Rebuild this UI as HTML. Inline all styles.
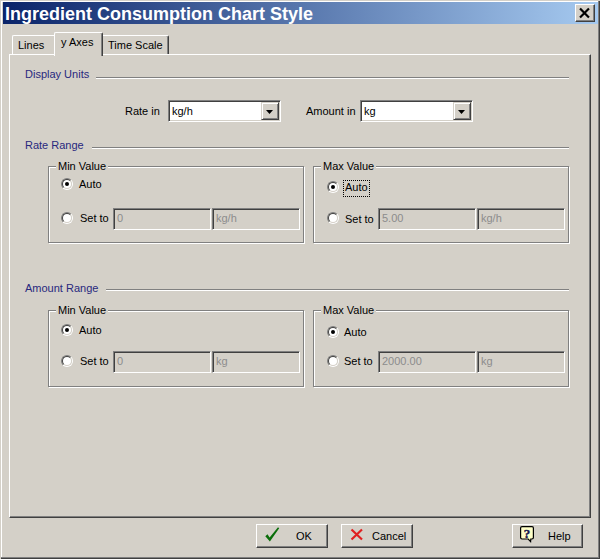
<!DOCTYPE html>
<html><head><meta charset="utf-8">
<style>
*{margin:0;padding:0;box-sizing:border-box}
html,body{width:601px;height:560px;overflow:hidden}
body{background:#d4d0c8;position:relative;font-family:"Liberation Sans",sans-serif;font-size:11px;color:#000}
.a{position:absolute}
.t{position:absolute;white-space:nowrap;line-height:13px;font-size:11px}
.h{color:#28287e}
.g{color:#8c8c8c}
.btn{position:absolute;background:#d4d0c8;border-top:1px solid #fff;border-left:1px solid #fff;border-right:1px solid #404040;border-bottom:1px solid #404040;box-shadow:inset -1px -1px #808080}
.fld{position:absolute;background:#d4d0c8;border-top:1px solid #808080;border-left:1px solid #808080;border-right:1px solid #fff;border-bottom:1px solid #fff;box-shadow:inset 1px 1px #404040,inset -1px -1px #d4d0c8}
.cmb{position:absolute;background:#fff;border-top:1px solid #808080;border-left:1px solid #808080;border-right:1px solid #fff;border-bottom:1px solid #fff;box-shadow:inset 1px 1px #404040,inset -1px -1px #d4d0c8}
.dd{position:absolute;width:18px;height:18px;background:#d4d0c8;border-top:1px solid #d4d0c8;border-left:1px solid #d4d0c8;border-right:1px solid #404040;border-bottom:1px solid #404040;box-shadow:inset 1px 1px #fff,inset -1px -1px #808080}
.grp{position:absolute;border:1px solid #808080;box-shadow:inset 1px 1px #fff,1px 1px #fff}
.sep{position:absolute;height:2px;border-top:1px solid #808080;border-bottom:1px solid #fff}
.lbl{position:absolute;background:#d4d0c8;height:13px}
.rad{position:absolute;width:12px;height:12px;border-radius:50%;border:1px solid;border-color:#808080 #fff #fff #808080}
.rad i{position:absolute;left:0;top:0;width:10px;height:10px;border-radius:50%;border:1px solid;border-color:#404040 #d4d0c8 #d4d0c8 #404040;background:#fff}
.rad b{position:absolute;left:3px;top:3px;width:4px;height:4px;background:#000;border-radius:50%}
</style></head><body>

<!-- window frame -->
<div class="a" style="left:0;top:0;width:601px;height:560px;background:#fff"></div>
<div class="a" style="left:0;top:0;width:600px;height:559px;background:#d4d0c8"></div>
<div class="a" style="left:1px;top:1px;width:599px;height:558px;background:#fff"></div>
<div class="a" style="left:1px;top:1px;width:599px;height:558px;border-right:1px solid #404040;border-bottom:1px solid #404040;box-shadow:inset -1px -1px #808080"></div>
<div class="a" style="left:2px;top:2px;width:596px;height:555px;background:#d4d0c8"></div>

<!-- title bar -->
<div class="a" style="left:3px;top:2px;width:595px;height:22px;background:linear-gradient(to right,#0a246a,#a6caf0)"></div>
<div class="a" style="left:5px;top:3px;font-size:18px;font-weight:bold;line-height:22px;color:#fff;white-space:nowrap">Ingredient Consumption Chart Style</div>
<div class="btn" style="left:575px;top:4px;width:20px;height:18px"></div>
<svg class="a" style="left:575px;top:4px" width="20" height="18"><path d="M5.8 5.3 L13.2 12.7 M13.2 5.3 L5.8 12.7" stroke="#000" stroke-width="2.2" stroke-linecap="square"/></svg>

<!-- tabs -->
<div class="a" style="left:9px;top:54px;width:582px;height:464px;border-top:1px solid #fff;border-left:1px solid #fff;border-right:1px solid #404040;border-bottom:1px solid #404040;box-shadow:inset -1px -1px #808080"></div>
<!-- Lines tab -->
<div class="a" style="left:12px;top:35px;width:42px;height:19px;border-top:1px solid #fff;border-left:1px solid #fff;border-top-left-radius:2px"></div>
<div class="t" style="left:18px;top:39px">Lines</div>
<!-- Time Scale tab -->
<div class="a" style="left:101px;top:35px;width:68px;height:19px;border-top:1px solid #fff;border-right:1px solid #404040;box-shadow:inset -1px 0 #808080;border-top-right-radius:2px"></div>
<div class="t" style="left:108px;top:39px">Time Scale</div>
<!-- selected tab -->
<div class="a" style="left:54px;top:32px;width:49px;height:24px;background:#d4d0c8;border-top:1px solid #fff;border-left:1px solid #fff;border-right:1px solid #404040;box-shadow:inset -1px 0 #808080;border-top-left-radius:2px;border-top-right-radius:2px"></div>
<div class="a" style="left:55px;top:54px;width:46px;height:2px;background:#d4d0c8"></div>
<div class="t" style="left:61px;top:36px">y Axes</div>

<!-- Display Units -->
<div class="t h" style="left:25px;top:68px">Display Units</div>
<div class="sep" style="left:96px;top:77px;width:473px"></div>
<div class="t" style="left:125px;top:105px">Rate in</div>
<div class="cmb" style="left:168px;top:100px;width:113px;height:22px"></div>
<div class="t" style="left:172px;top:105px">kg/h</div>
<div class="dd" style="left:261px;top:102px"></div>
<svg class="a" style="left:266px;top:110px" width="7" height="4"><path d="M0 0H7L3.5 4Z" fill="#000"/></svg>

<div class="t" style="left:306px;top:105px">Amount in</div>
<div class="cmb" style="left:360px;top:100px;width:113px;height:22px"></div>
<div class="t" style="left:364px;top:105px">kg</div>
<div class="dd" style="left:453px;top:102px"></div>
<svg class="a" style="left:458px;top:110px" width="7" height="4"><path d="M0 0H7L3.5 4Z" fill="#000"/></svg>

<!-- Rate Range -->
<div class="t h" style="left:25px;top:139px">Rate Range</div>
<div class="sep" style="left:92px;top:147px;width:477px"></div>

<div class="grp" style="left:48px;top:166px;width:256px;height:77px"></div>
<div class="lbl" style="left:56px;top:160px;width:52px"></div>
<div class="t" style="left:58px;top:160px">Min Value</div>
<div class="rad" style="left:61px;top:178px"><i></i><b></b></div>
<div class="t" style="left:79px;top:178px">Auto</div>
<div class="rad" style="left:61px;top:212px"><i></i></div>
<div class="t" style="left:80px;top:212px">Set to</div>
<div class="fld" style="left:113px;top:208px;width:98px;height:22px"></div>
<div class="t g" style="left:117px;top:212px">0</div>
<div class="fld" style="left:212px;top:208px;width:88px;height:22px"></div>
<div class="t g" style="left:216px;top:212px">kg/h</div>

<div class="grp" style="left:313px;top:166px;width:256px;height:77px"></div>
<div class="lbl" style="left:321px;top:160px;width:55px"></div>
<div class="t" style="left:323px;top:160px">Max Value</div>
<div class="rad" style="left:327px;top:181px"><i></i><b></b></div>
<div class="t" style="left:345px;top:181px">Auto</div>
<div class="a" style="left:343px;top:180px;width:27px;height:17px;border:1px dotted #000"></div>
<div class="rad" style="left:327px;top:212px"><i></i></div>
<div class="t" style="left:345px;top:213px">Set to</div>
<div class="fld" style="left:378px;top:208px;width:98px;height:22px"></div>
<div class="t g" style="left:382px;top:212px">5.00</div>
<div class="fld" style="left:477px;top:208px;width:88px;height:22px"></div>
<div class="t g" style="left:481px;top:212px">kg/h</div>

<!-- Amount Range -->
<div class="t h" style="left:25px;top:282px">Amount Range</div>
<div class="sep" style="left:106px;top:289px;width:463px"></div>

<div class="grp" style="left:48px;top:310px;width:256px;height:77px"></div>
<div class="lbl" style="left:56px;top:304px;width:52px"></div>
<div class="t" style="left:58px;top:304px">Min Value</div>
<div class="rad" style="left:61px;top:324px"><i></i><b></b></div>
<div class="t" style="left:79px;top:324px">Auto</div>
<div class="rad" style="left:61px;top:355px"><i></i></div>
<div class="t" style="left:80px;top:355px">Set to</div>
<div class="fld" style="left:113px;top:351px;width:98px;height:22px"></div>
<div class="t g" style="left:117px;top:355px">0</div>
<div class="fld" style="left:212px;top:351px;width:88px;height:22px"></div>
<div class="t g" style="left:216px;top:355px">kg</div>

<div class="grp" style="left:313px;top:310px;width:256px;height:77px"></div>
<div class="lbl" style="left:321px;top:304px;width:55px"></div>
<div class="t" style="left:323px;top:304px">Max Value</div>
<div class="rad" style="left:327px;top:326px"><i></i><b></b></div>
<div class="t" style="left:344px;top:326px">Auto</div>
<div class="rad" style="left:327px;top:355px"><i></i></div>
<div class="t" style="left:344px;top:355px">Set to</div>
<div class="fld" style="left:378px;top:351px;width:98px;height:22px"></div>
<div class="t g" style="left:382px;top:355px">2000.00</div>
<div class="fld" style="left:477px;top:351px;width:88px;height:22px"></div>
<div class="t g" style="left:481px;top:355px">kg</div>

<!-- buttons -->
<div class="btn" style="left:256px;top:524px;width:72px;height:24px"></div>
<svg class="a" style="left:264px;top:527px" width="16" height="16"><path d="M1.3 9.2 L3.5 7.2 L5.6 10.4 L14 0.2 L15.2 1.2 L5.9 14.4 Z" fill="#0a6e0a"/></svg>
<div class="t" style="left:296px;top:530px">OK</div>

<div class="btn" style="left:341px;top:524px;width:72px;height:24px"></div>
<svg class="a" style="left:350px;top:528px" width="14" height="13"><path d="M1.5 1.5 L12 11.5 M12 1.5 L1.5 11.5" fill="none" stroke="#e02020" stroke-width="2.2"/></svg>
<div class="t" style="left:372px;top:530px">Cancel</div>

<div class="btn" style="left:512px;top:524px;width:71px;height:24px"></div>
<svg class="a" style="left:519px;top:525px" width="17" height="19"><path d="M3 1.6 H13 Q14.4 1.6 14.4 3 V12.6 Q14.4 14 13 14 H11.8 L11.6 16.6 L9.2 14 H3 Q1.6 14 1.6 12.6 V3 Q1.6 1.6 3 1.6 Z" fill="#ffffc8" stroke="#000" stroke-width="1.2"/><text x="8" y="13" font-family="Liberation Serif" font-weight="bold" font-size="13" text-anchor="middle" fill="#1a1a50" stroke="#1a1a50" stroke-width="0.4">?</text></svg>
<div class="t" style="left:548px;top:530px">Help</div>

</body></html>
